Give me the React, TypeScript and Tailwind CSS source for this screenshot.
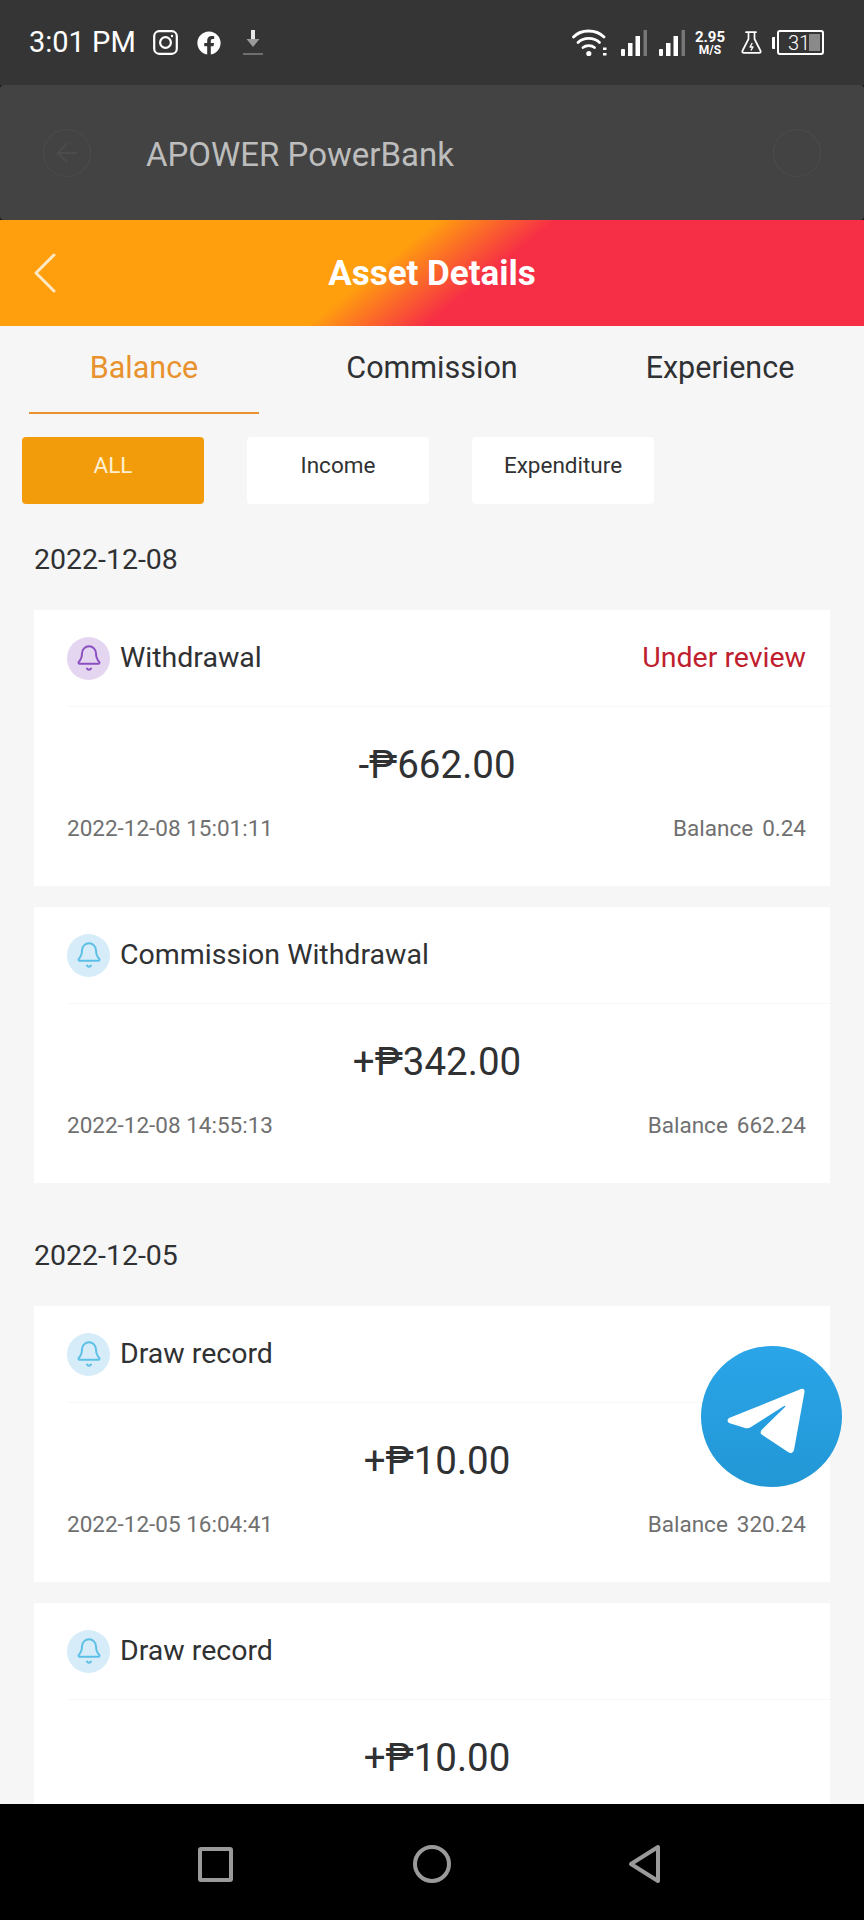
import React from 'react';
import { Bell, ChevronLeft, ArrowLeft } from 'lucide-react';
import { FaFacebook } from 'react-icons/fa';

const Signal = () => (
  <svg width="26" height="26" viewBox="0 0 26 26" fill="white">
    <rect x="0" y="19" width="4" height="7" rx="1" />
    <rect x="7" y="13" width="4.5" height="13" />
    <rect x="14.5" y="6" width="4.5" height="20" />
    <rect x="22.5" y="0" width="3.5" height="26" fill="#777" />
  </svg>
);

const StatusBar = () => (
  <div className="h-[85px] bg-[#353535] flex items-center justify-between pl-[29px] pr-[40px] text-white">
    <div className="flex items-center">
      <span className="text-[29px] leading-none w-[105px] whitespace-nowrap">3:01 PM</span>
      <svg className="ml-[19px]" width="25" height="25" viewBox="0 0 25 25" fill="none" stroke="white" strokeWidth="2.2">
        <rect x="1.2" y="1.2" width="22.6" height="22.6" rx="5" />
        <circle cx="12.5" cy="12.5" r="5.4" />
        <circle cx="19" cy="6" r="1.2" fill="white" stroke="none" />
      </svg>
      <FaFacebook className="ml-[19px]" size={24} color="white" />
      <svg className="ml-[22px]" width="20" height="26" viewBox="0 0 20 26">
        <rect x="8" y="0" width="4" height="9" fill="#e8e8e8" />
        <path d="M3.5 9 H16.5 L10 17 Z" fill="#9a9a9a" />
        <rect x="0" y="23" width="20" height="2" fill="#6e6e6e" />
      </svg>
    </div>
    <div className="flex items-center">
      <svg width="35" height="28" viewBox="0 0 35 28" fill="none" stroke="white" strokeWidth="2.8" strokeLinecap="round">
        <path d="M1.5 8 C9 0 24 0 32 8" />
        <path d="M6 13.5 C11.5 8 22 8 27.5 13.5" />
        <path d="M11 18.5 C14 16 19.5 16 22.5 18.5" />
        <circle cx="16.8" cy="24.5" r="2.6" fill="white" stroke="none" />
        <rect x="31" y="18.5" width="3.5" height="2.5" fill="white" stroke="none" />
        <rect x="31" y="24" width="3.5" height="2.5" fill="white" stroke="none" />
      </svg>
      <div className="ml-[14px]"><Signal /></div>
      <div className="ml-[12px]"><Signal /></div>
      <div className="ml-[9px] w-[32px] flex flex-col items-center font-bold leading-none">
        <span className="text-[15px] leading-[14px]">2.95</span>
        <span className="text-[12px] leading-[12px]">M/S</span>
      </div>
      <svg className="ml-[15px]" width="21" height="23" viewBox="0 0 21 23" fill="none" stroke="white" strokeWidth="1.7" strokeLinejoin="round" strokeLinecap="round">
        <path d="M5 1.2 H15 M7.5 1.2 V8 L1.4 20 Q0.8 21.8 3 21.8 H18 Q20.2 21.8 19.6 20 L13.5 8 V1.2" />
        <path d="M11 12.5 L9 16 H12 L10.2 19" strokeWidth="1.4" />
      </svg>
      <div className="ml-[10px] w-[3px] h-[12px] bg-white rounded-l-[1px]" />
      <div className="ml-[2px] w-[47px] h-[25px] border-2 border-white rounded-[3px] flex items-center overflow-hidden pl-[9px] relative">
        <div className="absolute right-[2px] top-[2px] bottom-[2px] w-[11px] bg-[#8a8a8a]" />
        <span className="relative text-[20px] leading-none font-light">31</span>
      </div>
    </div>
  </div>
);

const AppHeader = () => (
  <div className="bg-[#161616]">
    <div className="h-[135px] bg-[#434343] rounded-[4px] flex items-center justify-between pl-[43px] pr-[43px]">
      <div className="flex items-center">
        <div className="w-[48px] h-[48px] rounded-full border border-[#4c4c4c] flex items-center justify-center">
          <ArrowLeft size={32} color="#4c4c4c" strokeWidth={1.5} />
        </div>
        <span className="ml-[55px] mt-[3px] text-[33px] leading-none text-[#bdbdbd] whitespace-nowrap">APOWER PowerBank</span>
      </div>
      <div className="w-[48px] h-[48px] rounded-full border border-[#4c4c4c]" />
    </div>
  </div>
);

const PageHeader = () => (
  <div className="h-[106px] bg-[linear-gradient(141deg,#ff9f0e_44%,#f62e46_56%)] flex items-center relative shrink-0">
    <ChevronLeft className="ml-[9px] text-[#ffe9c4]" size={72} strokeWidth={1} />
    <span className="absolute left-0 right-0 text-center text-[35px] leading-none font-bold text-white">Asset Details</span>
  </div>
);

const Tab = ({ label, active }: any) => (
  <div className="flex flex-col items-center h-[88px]">
    <div className={`h-[85px] flex items-center text-[30.5px] leading-none ${active ? 'text-[#e8922e]' : 'text-[#303133]'}`}>{label}</div>
    {active && <div className="mt-[1px] w-[230px] h-[2px] bg-[#e8922e]" />}
  </div>
);

const Filter = ({ label, active }: any) => (
  <div className={`w-[182px] h-[67px] rounded-[4px] flex justify-center pt-[17px] text-[22.5px] leading-none ${active ? 'bg-[#f39c0b] text-[#fdf0d0]' : 'bg-white text-[#303133]'}`}>
    {label}
  </div>
);

const Card = ({ title, status, amount, time, balance, tone }: any) => (
  <div className="bg-white h-[276px] mb-[21px] flex flex-col">
    <div className="h-[97px] ml-[33px] pr-[24px] flex items-center justify-between border-b border-[#f8f8f8]">
      <div className="flex items-center">
        <div className={`w-[43px] h-[43px] rounded-full flex items-center justify-center ${tone === 'purple' ? 'bg-[#e4d6f0]' : 'bg-[#d6ecf9]'}`}>
          <Bell size={28} strokeWidth={1.7} className={tone === 'purple' ? 'text-[#8b4fc0]' : 'text-[#5cc0e6]'} />
        </div>
        <span className="ml-[10px] text-[28.5px] leading-none text-[#303133]">{title}</span>
      </div>
      {status && <span className="text-[28.5px] leading-none text-[#c0202e]">{status}</span>}
    </div>
    <div className="h-[110px] flex items-center justify-center pl-[10px] pt-[6px] text-[38.5px] leading-none text-[#303133]">{amount}</div>
    {time && (
      <div className="ml-[33px] pr-[24px] flex items-center justify-between text-[22.5px] leading-none text-[#707070]">
        <span>{time}</span>
        <span>Balance<span className="ml-[9px]">{balance}</span></span>
      </div>
    )}
  </div>
);

const groups = [
  {
    date: '2022-12-08',
    items: [
      { title: 'Withdrawal', status: 'Under review', amount: '-₱662.00', time: '2022-12-08 15:01:11', balance: '0.24', tone: 'purple' },
      { title: 'Commission Withdrawal', amount: '+₱342.00', time: '2022-12-08 14:55:13', balance: '662.24', tone: 'blue' },
    ],
  },
  {
    date: '2022-12-05',
    items: [
      { title: 'Draw record', amount: '+₱10.00', time: '2022-12-05 16:04:41', balance: '320.24', tone: 'blue' },
      { title: 'Draw record', amount: '+₱10.00', tone: 'blue' },
    ],
  },
];

const BottomNav = () => (
  <div className="h-[116px] shrink-0 bg-black flex items-center pl-[198px] pt-[4px]">
    <div className="w-[35px] h-[35px] border-[4px] border-[#9a9a9a] rounded-[3px]" />
    <div className="ml-[180px] w-[38px] h-[38px] border-[4px] border-[#9a9a9a] rounded-full" />
    <svg className="ml-[177px]" width="34" height="40" viewBox="0 0 34 40" fill="none" stroke="#9a9a9a" strokeWidth="4" strokeLinejoin="round">
      <path d="M30 3 V37 L3 20 Z" />
    </svg>
  </div>
);

export default function App() {
  return (
    <div className="w-[864px] h-[1920px] bg-[#f6f6f6] flex flex-col overflow-hidden relative font-['Roboto',sans-serif]">
      <StatusBar />
      <AppHeader />
      <PageHeader />
      <div className="flex-1 overflow-hidden">
        <div className="grid grid-cols-3">
          <Tab label="Balance" active />
          <Tab label="Commission" />
          <Tab label="Experience" />
        </div>
        <div className="flex gap-[43px] pl-[22px] pt-[23px] pb-[4px]">
          <Filter label="ALL" active />
          <Filter label="Income" />
          <Filter label="Expenditure" />
        </div>
        {groups.map((g) => (
          <div key={g.date} className="pt-[21px] px-[34px]">
            <div className="h-[62px] mb-[19px] flex items-center text-[28.5px] leading-none text-[#303133]">{g.date}</div>
            {g.items.map((c, i) => (
              <Card key={i} {...c} />
            ))}
          </div>
        ))}
      </div>
      <BottomNav />
      {/* floating telegram button */}
      <div className="absolute left-[701px] top-[1346px] w-[141px] h-[141px] rounded-full bg-gradient-to-b from-[#2aa5e8] to-[#2297d6]">
        <svg width="141" height="141" viewBox="0 0 141 141" fill="white">
          <path d="M28 72 L100 43 Q104 42 103.5 46 L93 104 Q91.5 109 87 106 L60 88 Q59 85.5 61 83.5 L84 61 Q85 59 83 60 L50 81 Q47 83 44 82 L28 77 Q25 74.5 28 72 Z" />
        </svg>
      </div>
    </div>
  );
}
